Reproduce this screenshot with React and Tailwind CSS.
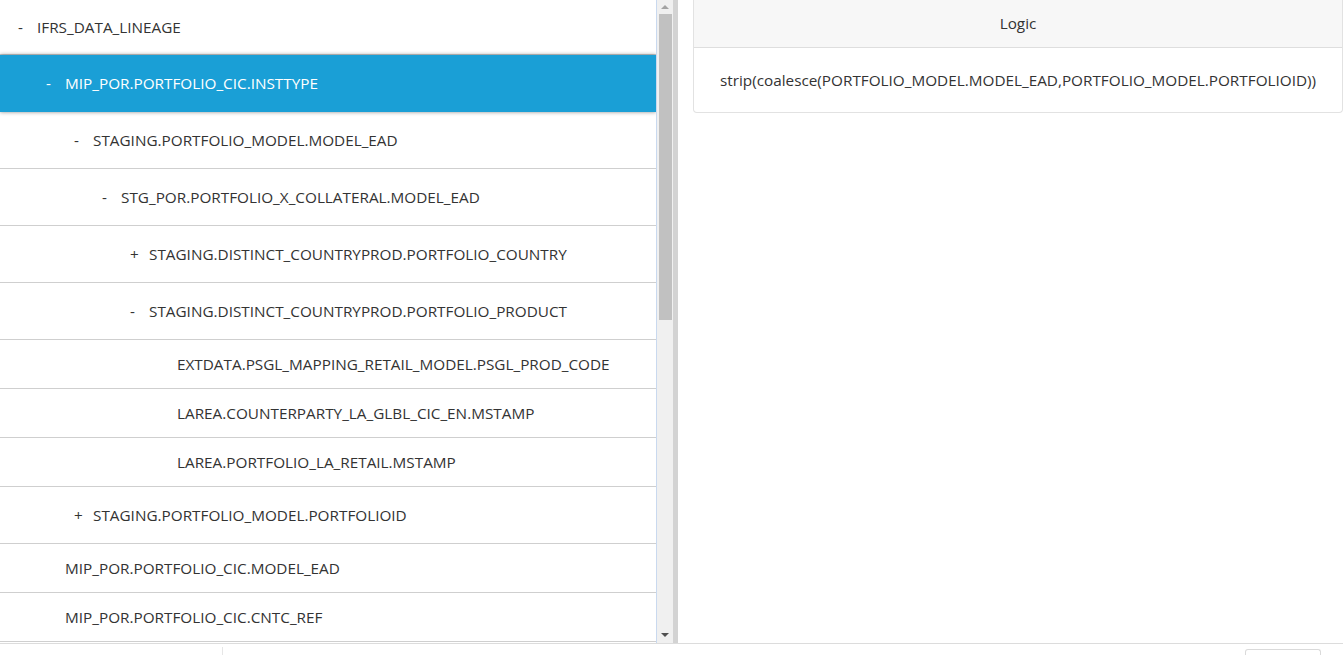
import React from 'react';

const rows = [
  { label: 'IFRS_DATA_LINEAGE', level: 0, toggle: '-', h: 'h-[55px]' },
  { label: 'MIP_POR.PORTFOLIO_CIC.INSTTYPE', level: 1, toggle: '-', h: 'h-[57px]', selected: true },
  { label: 'STAGING.PORTFOLIO_MODEL.MODEL_EAD', level: 2, toggle: '-', h: 'h-[57px]' },
  { label: 'STG_POR.PORTFOLIO_X_COLLATERAL.MODEL_EAD', level: 3, toggle: '-', h: 'h-[57px]' },
  { label: 'STAGING.DISTINCT_COUNTRYPROD.PORTFOLIO_COUNTRY', level: 4, toggle: '+', h: 'h-[57px]' },
  { label: 'STAGING.DISTINCT_COUNTRYPROD.PORTFOLIO_PRODUCT', level: 4, toggle: '-', h: 'h-[57px]' },
  { label: 'EXTDATA.PSGL_MAPPING_RETAIL_MODEL.PSGL_PROD_CODE', level: 5, h: 'h-[49px]' },
  { label: 'LAREA.COUNTERPARTY_LA_GLBL_CIC_EN.MSTAMP', level: 5, h: 'h-[49px]' },
  { label: 'LAREA.PORTFOLIO_LA_RETAIL.MSTAMP', level: 5, h: 'h-[49px]' },
  { label: 'STAGING.PORTFOLIO_MODEL.PORTFOLIOID', level: 2, toggle: '+', h: 'h-[57px]' },
  { label: 'MIP_POR.PORTFOLIO_CIC.MODEL_EAD', level: 1, h: 'h-[49px]' },
  { label: 'MIP_POR.PORTFOLIO_CIC.CNTC_REF', level: 1, h: 'h-[49px]' },
];

const indent = ['pl-[18px]', 'pl-[46px]', 'pl-[74px]', 'pl-[102px]', 'pl-[130px]', 'pl-[158px]'];

function TreeRow({ row }) {
  const base = row.selected
    ? 'bg-[#1a9fd6] text-white shadow-[0_0_4px_rgba(0,0,0,0.45)] relative z-10'
    : 'bg-white text-[#333] border-b border-[#cfcfcf]';
  return (
    <div className={`${row.h} ${base} ${indent[row.level]} flex items-center shrink-0`}>
      <span className="w-[19px] shrink-0">{row.toggle || ''}</span>
      <span>{row.label}</span>
    </div>
  );
}

export default function App() {
  return (
    <div className="w-[1343px] h-[655px] bg-white overflow-hidden text-[15.3px] font-['Open_Sans',sans-serif] flex flex-col">
      <div className="flex h-[644px] border-b border-[#dcdcdc]">
        <div className="w-[656px] flex flex-col overflow-hidden">
          {rows.map((r, i) => (
            <TreeRow key={i} row={r} />
          ))}
        </div>
        <div className="w-[1px] bg-[#c9d9ef]" />
        <div className="w-[16px] bg-[#f0f0f0] flex flex-col items-center">
          <div className="h-[14px] flex items-center justify-center">
            <div className="w-0 h-0 border-l-[4px] border-r-[4px] border-b-[4px] border-l-transparent border-r-transparent border-b-[#a3a3a3]" />
          </div>
          <div className="w-[13px] h-[306px] bg-[#c1c1c1]" />
          <div className="flex-1" />
          <div className="h-[16px] flex items-center justify-center">
            <div className="w-0 h-0 border-l-[4px] border-r-[4px] border-t-[4px] border-l-transparent border-r-transparent border-t-[#505050]" />
          </div>
        </div>
        <div className="w-[5px] bg-[#d3d3d3]" />
        <div className="flex-1 pl-[15px]">
          <div className="border border-[#e2e2e2] border-t-0 rounded-b-[4px] text-[#333]">
            <div className="h-[48px] bg-[#f7f7f7] border-b border-[#dedede] flex items-center justify-center">
              Logic
            </div>
            <div className="h-[64px] flex items-center justify-center">
              strip(coalesce(PORTFOLIO_MODEL.MODEL_EAD,PORTFOLIO_MODEL.PORTFOLIOID))
            </div>
          </div>
        </div>
      </div>
      <div className="flex-1 flex items-end">
        <div className="ml-[222px] w-[1px] h-[8px] bg-[#e6e6e6]" />
        <div className="ml-auto mr-[22px] w-[76px] h-[6px] border border-b-0 border-[#dadada] rounded-t-[3px]" />
      </div>
    </div>
  );
}
